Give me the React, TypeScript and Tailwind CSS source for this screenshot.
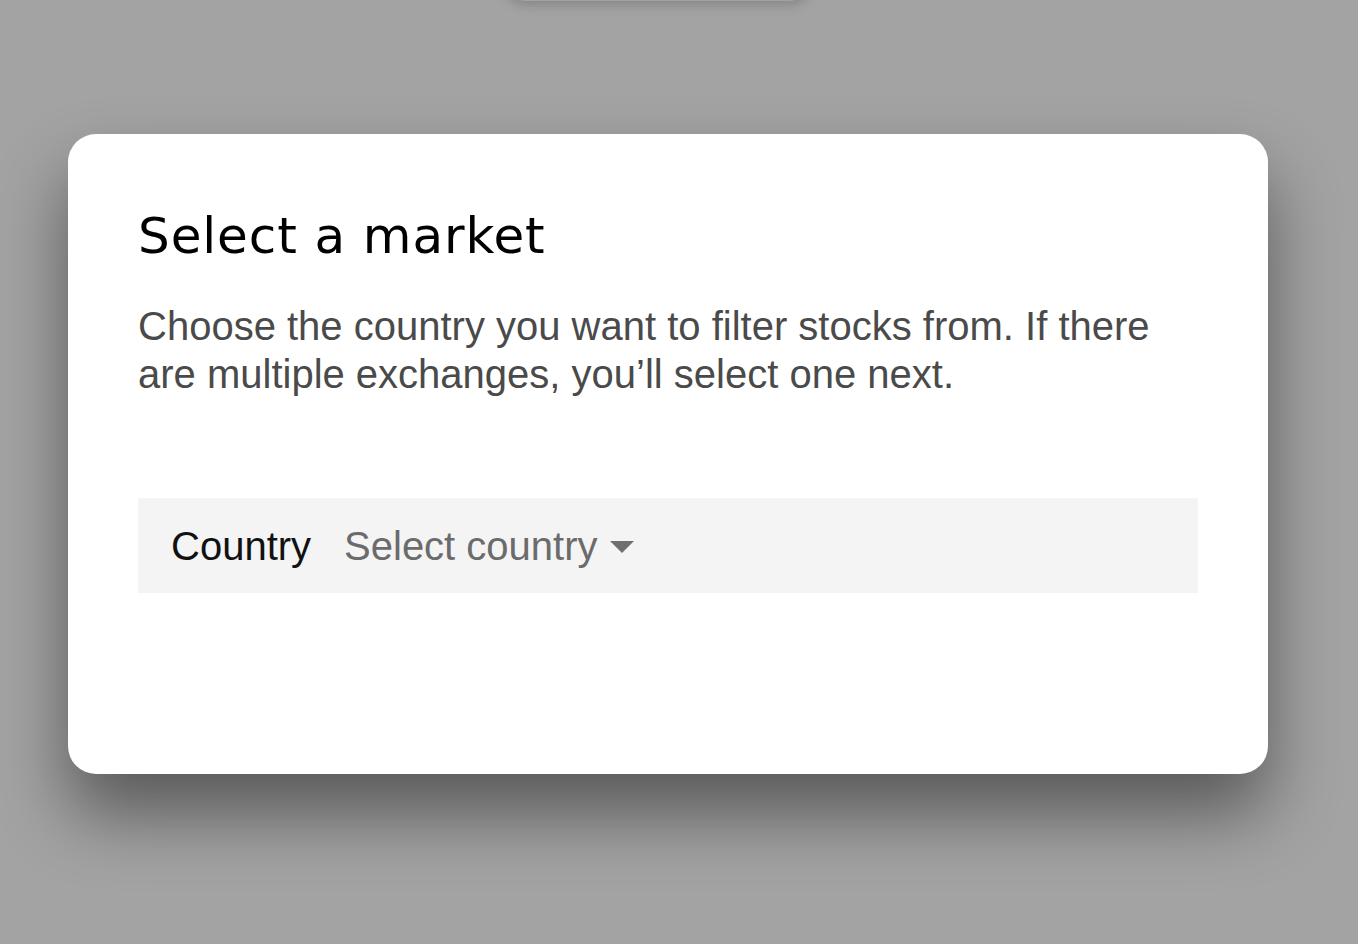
export default function App() {
  return (
    <div className="relative min-h-[944px] w-full overflow-hidden bg-[#a3a3a3]">
      {/* edge of the sheet behind, mostly off-screen */}
      <div className="absolute left-[503px] top-[-60px] h-[61px] w-[310px] rounded-b-[24px] bg-[#a3a3a3] shadow-[0_4px_12px_rgba(0,0,0,0.18)]" />

      <div className="flex pl-[68px] pt-[134px]">
        <div className="h-[640px] w-[1200px] rounded-[28px] bg-white px-[70px] pt-[70px] shadow-[0_40px_70px_rgba(0,0,0,0.45)]">
          <h1 className="font-['DejaVu_Sans',sans-serif] text-[50px] font-normal leading-[64px] tracking-[0.9px] text-black">
            Select a market
          </h1>
          <p className="mt-[34px] font-['Liberation_Sans',Arial,sans-serif] text-[40px] leading-[48px] text-[#4a4a4a]">
            Choose the country you want to filter stocks from. If there are multiple exchanges, you’ll select one next.
          </p>

          <div className="mt-[100px] flex h-[95px] items-center gap-[33px] bg-[#f4f4f4] px-[33px] font-['Liberation_Sans',Arial,sans-serif] text-[40px]">
            <span className="text-[#111111]">Country</span>
            <button className="flex items-center gap-[12px] text-[#6b6b6b]">
              <span>Select country</span>
              <svg width="24" height="14" viewBox="0 0 24 14" className="mt-[2px]">
                <path d="M0 1h24L12 13z" fill="#6f6f6f" />
              </svg>
            </button>
          </div>
        </div>
      </div>
    </div>
  )
}
